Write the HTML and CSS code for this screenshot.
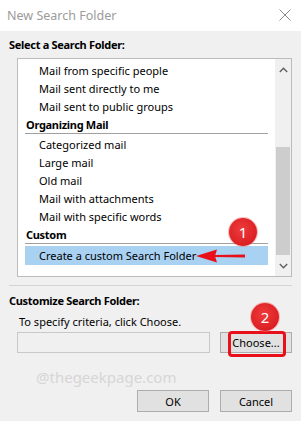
FILE: index.html
```html
<!DOCTYPE html>
<html lang="en">
<head>
    <meta charset="UTF-8">
    <meta name="viewport" content="width=device-width, initial-scale=1.0">
    <title>New Search Folder</title>
    <link rel="stylesheet" href="styles.css">
</head>
<body>
    <div class="dialog">
        <div class="titlebar">
            <span class="title">New Search Folder</span>
            <svg class="close" width="12" height="12" viewBox="0 0 12 12">
                <path d="M0.5 0.5 L11.5 11.5 M11.5 0.5 L0.5 11.5" stroke="#8a8a8a" stroke-width="1" fill="none"/>
            </svg>
        </div>

        <div class="content">
            <div class="section-title">Select a Search Folder:</div>

            <div class="listbox">
                <div class="list">
                    <div class="item">Mail from specific people</div>
                    <div class="item">Mail sent directly to me</div>
                    <div class="item">Mail sent to public groups</div>
                    <div class="group">Organizing Mail</div>
                    <div class="item">Categorized mail</div>
                    <div class="item">Large mail</div>
                    <div class="item">Old mail</div>
                    <div class="item">Mail with attachments</div>
                    <div class="item">Mail with specific words</div>
                    <div class="group">Custom</div>
                    <div class="item selected">Create a custom Search Folder</div>
                </div>
                <div class="scrollbar">
                    <div class="scroll-btn">
                        <svg width="9" height="6" viewBox="0 0 9 6"><path d="M0.8 5 L4.5 1.3 L8.2 5" stroke="#606060" stroke-width="1.4" fill="none"/></svg>
                    </div>
                    <div class="track">
                        <div class="thumb"></div>
                    </div>
                    <div class="scroll-btn">
                        <svg width="9" height="6" viewBox="0 0 9 6"><path d="M0.8 1 L4.5 4.7 L8.2 1" stroke="#606060" stroke-width="1.4" fill="none"/></svg>
                    </div>
                </div>
            </div>

            <div class="divider"></div>

            <div class="section-title">Customize Search Folder:</div>
            <div class="hint">To specify criteria, click Choose.</div>
            <div class="criteria-row">
                <div class="criteria-box"></div>
                <button class="btn choose">Choose...</button>
            </div>

            <div class="watermark">@thegeekpage.com</div>

            <div class="footer">
                <button class="btn">OK</button>
                <button class="btn">Cancel</button>
            </div>
        </div>

        <!-- annotations -->
        <div class="badge badge-one">1</div>
        <svg class="arrow" width="52" height="16" viewBox="0 0 52 16">
            <path d="M20 7 L50 6.5 L50 9.5 L20 9 Z" fill="#e8101a"/>
            <path d="M1 8 L22 1.5 L20 8 L22 14.5 Z" fill="#e8101a"/>
        </svg>
        <div class="highlight-box"></div>
        <div class="badge badge-two">2</div>
    </div>
</body>
</html>
```

FILE: styles.css
```css
body {
    margin: 0;
    padding: 0;
    background-color: #f0f0f0;
    font-family: "Noto Sans", sans-serif;
    font-size: 11px;
    color: #000;
}

.dialog {
    position: relative;
    width: 301px;
    height: 421px;
    overflow: hidden;
}

.titlebar {
    height: 31px;
    background-color: #fff;
    display: flex;
    align-items: center;
    justify-content: space-between;
    padding: 0 10px 0 7px;
    box-sizing: border-box;
}

.title {
    font-size: 12.5px;
    color: #9b9b9b;
}

.close {
    margin-top: -1px;
}

.content {
    padding: 6px 9px 0 9px;
}

.section-title {
    font-weight: bold;
    letter-spacing: -0.3px;
    line-height: 16px;
}

.listbox {
    margin: 5px 0 0 8px;
    height: 219px;
    border: 1px solid #bcbcbc;
    box-sizing: border-box;
    background-color: #fff;
    display: flex;
}

.list {
    flex: 1;
    padding: 3px 7px 0 7px;
    overflow: hidden;
}

.item {
    height: 18px;
    line-height: 18px;
    padding-left: 14px;
}

.group {
    height: 17px;
    line-height: 17px;
    font-weight: bold;
    letter-spacing: -0.3px;
    padding-left: 1px;
    border-bottom: 1px solid #a0a0a0;
    margin-bottom: 2px;
}

.item.selected {
    background-color: #a9d1f2;
    height: 19px;
    line-height: 19px;
}

.scrollbar {
    width: 16px;
    background-color: #f0f0f0;
    display: flex;
    flex-direction: column;
}

.scroll-btn {
    height: 21px;
    display: flex;
    align-items: center;
    justify-content: center;
}

.track {
    flex: 1;
    display: flex;
    flex-direction: column;
    justify-content: flex-end;
}

.thumb {
    height: 108px;
    margin: 0 1px;
    background-color: #cdcdcd;
}

.divider {
    height: 1px;
    background-color: #d5d5d5;
    margin: 8px 0 7px 0;
}

.hint {
    line-height: 16px;
    padding-left: 10px;
    margin-top: 5px;
}

.criteria-row {
    display: flex;
    justify-content: space-between;
    margin: 2px 0 0 8px;
}

.criteria-box {
    width: 193px;
    height: 21px;
    box-sizing: border-box;
    border: 1px solid #c8c8c8;
    background-color: #f0f0f0;
}

.btn {
    width: 72px;
    height: 22px;
    box-sizing: border-box;
    border: 1px solid #adadad;
    background-color: #e1e1e1;
    font-family: "Noto Sans", sans-serif;
    font-size: 11px;
    color: #000;
    padding: 0;
}

.choose {
    height: 21px;
}

.watermark {
    font-size: 15px;
    color: #d6d6d6;
    line-height: 20px;
    margin: 14px 0 0 27px;
}

.footer {
    display: flex;
    justify-content: flex-end;
    gap: 11px;
    margin-top: 3px;
}

.badge {
    position: absolute;
    width: 28px;
    height: 28px;
    border-radius: 50%;
    background: radial-gradient(circle at 45% 40%, #ef3b3b 0%, #dc2226 65%, #c81a1e 100%);
    box-shadow: 0 0 0 1px rgba(255, 120, 120, 0.5);
    color: #fff;
    font-size: 15px;
    line-height: 28px;
    text-align: center;
}

.badge-one {
    left: 229px;
    top: 218px;
}

.badge-two {
    left: 251px;
    top: 303px;
}

.arrow {
    position: absolute;
    left: 195px;
    top: 248px;
}

.highlight-box {
    position: absolute;
    left: 228px;
    top: 331px;
    width: 58px;
    height: 26px;
    box-sizing: border-box;
    border: 3px solid #e8101a;
    border-radius: 4px;
}
```
